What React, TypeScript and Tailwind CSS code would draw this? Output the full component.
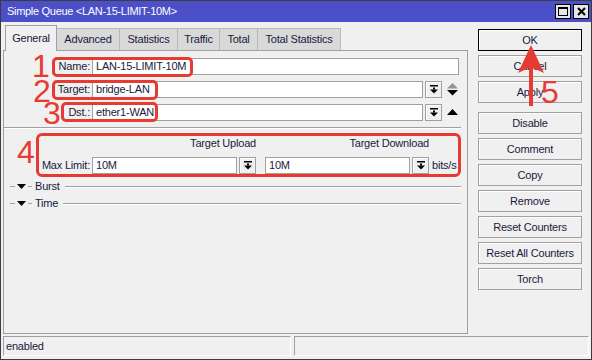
import React from 'react';

const tabs = [
  { name: 'General', w: 'w-[52px]', active: true },
  { name: 'Advanced', w: 'w-[63px]' },
  { name: 'Statistics', w: 'w-[58px]' },
  { name: 'Traffic', w: 'w-[42px]' },
  { name: 'Total', w: 'w-[38px]' },
  { name: 'Total Statistics', w: 'w-[83px]' },
];

const buttons = ['Disable', 'Comment', 'Copy', 'Remove', 'Reset Counters', 'Reset All Counters', 'Torch'];

function DropBtn() {
  return (
    <div className="ml-[2px] flex h-[17px] w-[17px] shrink-0 items-center justify-center border border-[#a0a0a0] bg-[#f0f0f0] shadow-[inset_1px_1px_0_#fff]">
      <svg width="8" height="9" viewBox="0 0 8 9">
        <rect x="0" y="0" width="8" height="1.5" fill="#000" />
        <rect x="3" y="2.5" width="2" height="2" fill="#000" />
        <polygon points="0,4.5 8,4.5 4,8.5" fill="#000" />
      </svg>
    </div>
  );
}

function Field({ value, w }: { value: string; w: string }) {
  return (
    <div className={`h-[17px] shrink-0 border border-[#a0a0a0] bg-white pl-[3px] leading-[15px] ${w}`}>{value}</div>
  );
}

function Label({ text }: { text: string }) {
  return <div className="w-[88px] shrink-0 pr-[2px] text-right leading-[17px]">{text}</div>;
}

function Section({ title }: { title: string }) {
  return (
    <div className="mr-[6px] flex h-[14px] items-center">
      <div className="ml-[6px] h-px w-[5px] bg-[#a0a0a0]" />
      <svg className="ml-[2px]" width="9" height="5" viewBox="0 0 9 5">
        <polygon points="0,0 9,0 4.5,5" fill="#000" />
      </svg>
      <div className="ml-[2px] h-px w-[4px] bg-[#a0a0a0]" />
      <span className="ml-[3px] leading-[14px]">{title}</span>
      <div className="ml-[5px] h-px flex-1 bg-[#a0a0a0] shadow-[0_1px_0_#fff]" />
    </div>
  );
}

function Btn({ label, focus }: { label: string; focus?: boolean }) {
  return (
    <div
      className={`flex h-[22px] items-center justify-center bg-[#f0f0f0] shadow-[inset_1px_1px_0_#fff] ${
        focus ? 'border border-black' : 'border border-[#a0a0a0]'
      }`}
    >
      {label}
    </div>
  );
}

export default function App() {
  return (
    <div className="relative flex h-[360px] w-[592px] flex-col overflow-hidden border border-[#3c3c3c] bg-[#f0f0f0] font-['Liberation_Sans',Arial,sans-serif] text-[11px] tracking-[-0.2px] text-[#1a1a3c]">
      {/* title bar */}
      <div className="flex h-[21px] shrink-0 items-center bg-[#4b50c9] pl-[6px] pr-[2px]">
        <span className="flex-1 text-[11px] tracking-[-0.3px] text-white">Simple Queue &lt;LAN-15-LIMIT-10M&gt;</span>
        <div className="flex h-[15px] w-[16px] items-center justify-center border border-black bg-[#e6e6e6]">
          <div className="h-[9px] w-[10px] border border-black border-t-2" />
        </div>
        <div className="ml-[2px] flex h-[15px] w-[16px] items-center justify-center border border-black bg-[#e6e6e6]">
          <svg width="9" height="9" viewBox="0 0 9 9">
            <path d="M1 1 L8 8 M8 1 L1 8" stroke="#000" strokeWidth="2" />
          </svg>
        </div>
      </div>

      {/* body */}
      <div className="flex h-[313px] shrink-0">
        <div className="ml-[2px] flex w-[465px] flex-col">
          <div className="mt-[3px] flex h-[25px] items-end pl-[2px]">
            {tabs.map((t) =>
              t.active ? (
                <div
                  key={t.name}
                  className={`relative z-10 -mb-px flex h-[26px] items-center justify-center border border-b-0 border-[#a0a0a0] bg-[#f0f0f0] ${t.w}`}
                >
                  {t.name}
                </div>
              ) : (
                <div
                  key={t.name}
                  className={`flex h-[22px] items-center justify-center border border-l-0 border-b-0 border-[#b8b8b8] bg-[#d9d9d9] ${t.w}`}
                >
                  {t.name}
                </div>
              )
            )}
          </div>
          <div className="flex h-[284px] flex-col border border-[#a0a0a0]">
            <div className="mt-[7px] flex">
              <Label text="Name:" />
              <Field value="LAN-15-LIMIT-10M" w="w-[367px]" />
            </div>
            <div className="mt-[6px] flex items-center">
              <Label text="Target:" />
              <Field value="bridge-LAN" w="w-[331px]" />
              <DropBtn />
              <svg className="ml-[5px]" width="11" height="13" viewBox="0 0 11 13">
                <polygon points="5.5,0 11,5.5 0,5.5" fill="#8a9a90" />
                <polygon points="0,7 11,7 5.5,12.5" fill="#000" />
              </svg>
            </div>
            <div className="mt-[6px] flex items-center">
              <Label text="Dst.:" />
              <Field value="ether1-WAN" w="w-[331px]" />
              <DropBtn />
              <svg className="ml-[5px]" width="11" height="7" viewBox="0 0 11 7">
                <polygon points="5.5,0 11,6 0,6" fill="#000" />
              </svg>
            </div>
            <div className="mr-[6px] mt-[6px] h-px bg-[#a0a0a0] shadow-[0_1px_0_#fff]" />
            <div className="mt-[8px] flex h-[14px] leading-[14px]">
              <div className="ml-[88px] w-[164px] text-right">Target Upload</div>
              <div className="ml-[9px] w-[164px] text-right">Target Download</div>
            </div>
            <div className="mt-[7px] flex items-center">
              <Label text="Max Limit:" />
              <Field value="10M" w="w-[145px]" />
              <DropBtn />
              <div className="w-[9px]" />
              <Field value="10M" w="w-[145px]" />
              <DropBtn />
              <span className="ml-[3px]">bits/s</span>
            </div>
            <div className="mt-[5px]">
              <Section title="Burst" />
            </div>
            <div className="mt-[3px]">
              <Section title="Time" />
            </div>
          </div>
        </div>

        <div className="ml-[10px] mt-[7px] flex w-[104px] flex-col gap-[4px]">
          <Btn label="OK" focus />
          <Btn label="Cancel" />
          <Btn label="Apply" />
          <div className="mt-[5px] flex flex-col gap-[4px]">
            {buttons.map((b) => (
              <Btn key={b} label={b} />
            ))}
          </div>
        </div>
      </div>

      {/* status bar */}
      <div className="mt-[1px] flex h-[20px] gap-[3px] px-[2px]">
        <div className="w-[288px] border border-[#a0a0a0] border-b-white border-r-white pl-[2px] leading-[18px]">enabled</div>
        <div className="flex-1 border border-[#a0a0a0] border-b-white border-r-white" />
      </div>

      {/* annotations */}
      <div className="absolute left-[51px] top-[56px] h-[20px] w-[141px] rounded-[5px] border-[3px] border-[#e53b32]" />
      <div className="absolute left-[51px] top-[79px] h-[20px] w-[106px] rounded-[5px] border-[3px] border-[#e53b32]" />
      <div className="absolute left-[60px] top-[101px] h-[20px] w-[97px] rounded-[5px] border-[3px] border-[#e53b32]" />
      <div className="absolute left-[35px] top-[132px] h-[44px] w-[425px] rounded-[6px] border-[3px] border-[#e53b32]" />

      <span className="absolute left-[31px] top-[49px] text-[32px] leading-[32px] tracking-normal text-[#e53b32]">1</span>
      <span className="absolute left-[32px] top-[74px] text-[32px] leading-[32px] tracking-normal text-[#e53b32]">2</span>
      <span className="absolute left-[42px] top-[96px] text-[32px] leading-[32px] tracking-normal text-[#e53b32]">3</span>
      <span className="absolute left-[16px] top-[135px] text-[32px] leading-[32px] tracking-normal text-[#e53b32]">4</span>
      <span className="absolute left-[540px] top-[75px] text-[32px] leading-[32px] tracking-normal text-[#e53b32]">5</span>

      <svg className="absolute left-[515px] top-[43px]" width="32" height="64" viewBox="0 0 32 64">
        <polygon points="15,1 28,29 15,23 2,29" fill="#e53b32" />
        <rect x="13" y="22" width="4" height="40" fill="#e53b32" />
      </svg>
    </div>
  );
}
